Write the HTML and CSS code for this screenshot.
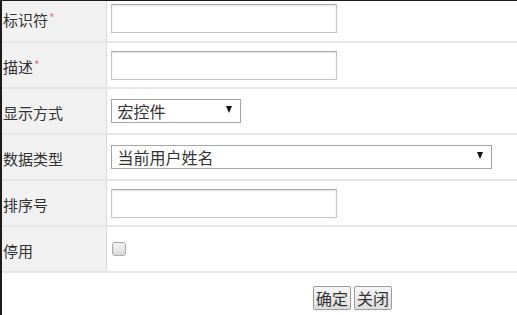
FILE: index.html
```html
<!DOCTYPE html>
<html lang="zh-CN">

<head>
    <meta charset="UTF-8">
    <title>字段属性</title>
    <link rel="stylesheet" href="styles.css">
</head>

<body>
    <div class="frame">
        <table class="form-table">
            <tr>
                <th>标识符<span class="req">*</span></th>
                <td><input type="text" class="text-input"></td>
            </tr>
            <tr>
                <th>描述<span class="req">*</span></th>
                <td><input type="text" class="text-input"></td>
            </tr>
            <tr>
                <th>显示方式</th>
                <td>
                    <span class="select short">
                        <span class="select-text">宏控件</span>
                        <span class="select-arrow"></span>
                    </span>
                </td>
            </tr>
            <tr>
                <th>数据类型</th>
                <td>
                    <span class="select long">
                        <span class="select-text">当前用户姓名</span>
                        <span class="select-arrow"></span>
                    </span>
                </td>
            </tr>
            <tr>
                <th>排序号</th>
                <td><input type="text" class="text-input"></td>
            </tr>
            <tr>
                <th>停用</th>
                <td><input type="checkbox" class="check"></td>
            </tr>
        </table>

        <!-- Buttons -->
        <div class="actions">
            <button class="btn">确定</button>
            <button class="btn">关闭</button>
        </div>
    </div>
</body>

</html>
```

FILE: styles.css
```css
/* Reset */
* {
    margin: 0;
    padding: 0;
    box-sizing: border-box;
}

body {
    background: #fff;
    font-family: "Noto Sans CJK SC", "Liberation Sans", sans-serif;
    color: #333;
    height: 315px;
    overflow: hidden;
}

/* Outer frame */
.frame {
    border-top: 1px solid #1c1c1c;
    border-left: 2px solid #1c1c1c;
    height: 315px;
    overflow: hidden;
}

/* Form table */
.form-table {
    width: 100%;
    border-collapse: collapse;
    margin-top: -5px;
}

.form-table tr {
    height: 46px;
    border-bottom: 2px solid #e6e6e6;
}

.form-table th {
    width: 104px;
    background: #f1f1f1;
    border-right: 1px solid #dcdcdc;
    text-align: left;
    font-weight: normal;
    font-size: 15px;
    padding: 2px 0 0 1px;
    vertical-align: middle;
    white-space: nowrap;
}

.form-table td {
    padding-left: 4px;
    vertical-align: middle;
}

.req {
    color: #ec6f8c;
    font-size: 12px;
    vertical-align: 3px;
    margin-left: 1px;
}

/* Text inputs */
.text-input {
    display: block;
    width: 226px;
    height: 29px;
    border: 1px solid #c4c4c4;
    border-top-color: #a9a9a9;
    box-shadow: inset 0 1px 2px #e2e2e2;
    background: #fff;
}

/* Select look-alike */
.select {
    display: flex;
    align-items: center;
    justify-content: space-between;
    height: 24px;
    border: 1px solid #a6a6a6;
    background: #fff;
    padding: 0 8px 0 6px;
    font-size: 16px;
    color: #333;
}

.select.short {
    width: 130px;
}

.select.long {
    width: 381px;
}

.select-arrow {
    width: 0;
    height: 0;
    border-left: 3.5px solid transparent;
    border-right: 3.5px solid transparent;
    border-top: 7px solid #111;
    margin-top: -3px;
}

/* Checkbox */
.check {
    appearance: none;
    -webkit-appearance: none;
    display: block;
    width: 14px;
    height: 14px;
    margin-left: 1px;
    border: 1px solid #a8a8a8;
    border-radius: 3px;
    background: linear-gradient(#f4f4f4, #dadada);
}

/* Buttons */
.actions {
    padding: 13px 0 0 311px;
    display: flex;
    gap: 3px;
}

.btn {
    height: 24px;
    padding: 0 2px;
    font-family: "Noto Sans CJK SC", sans-serif;
    font-size: 16px;
    line-height: 20px;
    color: #333;
    border: 1px solid #9c9c9c;
    border-radius: 2px;
    background: linear-gradient(#f6f6f6, #dedede);
}
```
